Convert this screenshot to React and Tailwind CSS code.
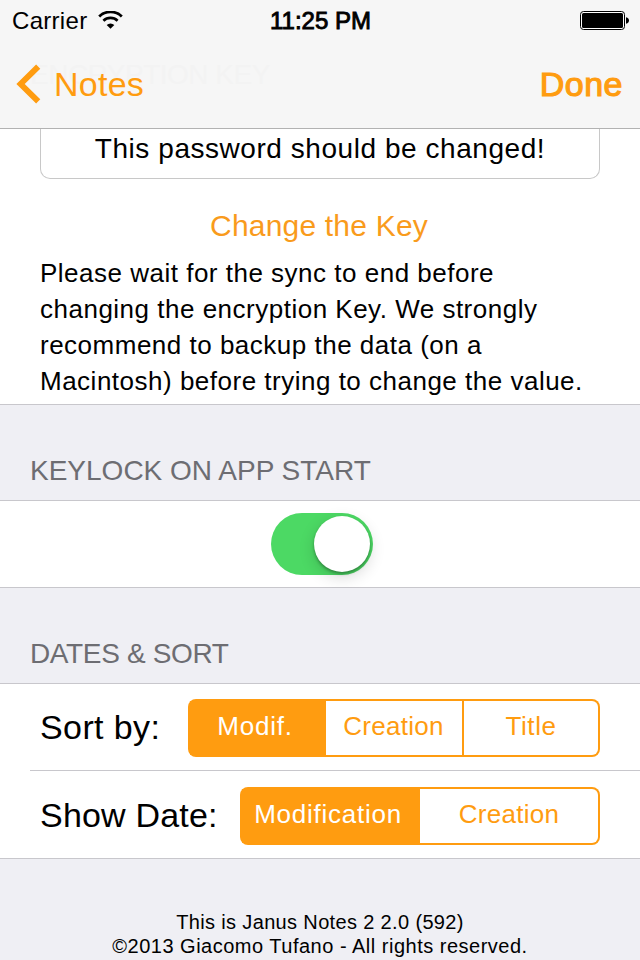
const SANS = "font-['Liberation_Sans',Arial,sans-serif]";

function WifiIcon() {
  return (
    <svg className="ml-[11px] h-[18px] w-[25px]" viewBox="0 0 25 18" fill="none" stroke="#000">
      <path d="M1.2 5.4 A16.5 16.5 0 0 1 23.8 5.4" strokeWidth="2.8" />
      <path d="M5.4 9.8 A10.3 10.3 0 0 1 19.6 9.8" strokeWidth="2.7" />
      <path d="M12.5 17.8 L8.7 14 A5.4 5.4 0 0 1 16.3 14 Z" fill="#000" stroke="none" />
    </svg>
  );
}

function BatteryIcon() {
  return (
    <svg className="h-[19px] w-[49px]" viewBox="0 0 49 19">
      <rect x="0.5" y="0.5" width="44" height="18" rx="3" fill="#fff" stroke="#000" />
      <rect x="2" y="2" width="41" height="15" rx="1.5" fill="#000" />
      <path d="M46 6.2 C48.2 6.6 49 8 49 9.5 C49 11 48.2 12.4 46 12.8 Z" fill="#000" />
    </svg>
  );
}

function SectionTitle({ children, className }) {
  return (
    <div className={`flex h-24 shrink-0 items-end border-b border-[#c8c7cc] bg-[#efeff4] pb-[13px] pl-[30px] text-[28px] leading-8 text-[#6d6d72] ${className}`}>
      <h2>{children}</h2>
    </div>
  );
}

function Segment({ label, selected, className }) {
  return (
    <button
      className={`flex items-center justify-center text-[26px] leading-none ${
        selected ? "bg-[#ff9c10] text-white" : "bg-white text-[#ff9c10]"
      } ${className}`}
    >
      {label}
    </button>
  );
}

export default function App() {
  return (
    <div className={`flex h-[960px] w-[640px] flex-col overflow-hidden bg-[#efeff4] text-black ${SANS}`}>
      <header className="relative h-[129px] shrink-0 border-b border-[#b2b2b2] bg-[#f6f6f6]">
        <div className="absolute top-[59px] left-[30px] text-[28px] leading-8 tracking-[-0.5px] text-[#f3f3f3]">ENCRYPTION KEY</div>
        <div className="relative grid h-10 grid-cols-3 items-center pr-[11px] pl-3">
          <div className="flex items-center text-[24px] leading-7 tracking-[0.3px]">
            <span className="pt-0.5">Carrier</span>
            <WifiIcon />
          </div>
          <div className="pt-0.5 text-center text-[24px] leading-7 whitespace-nowrap [-webkit-text-stroke:0.9px_#000]">11:25 PM</div>
          <div className="flex justify-end">
            <BatteryIcon />
          </div>
        </div>
        <nav className="relative flex h-[88px] items-center justify-between pr-[17px] pl-4 text-[34px] leading-10 text-[#ff9c10]">
          <button className="flex items-center">
            <svg className="h-[42px] w-[26px]" viewBox="0 0 26 42" fill="none">
              <path d="M22.2 3.7 L4.6 21 L22.2 38.3" stroke="#ff9c10" strokeWidth="5.9" />
            </svg>
            <span className="ml-3 tracking-[0.25px]">Notes</span>
          </button>
          <button className="tracking-[0.5px] [-webkit-text-stroke:1.2px_#ff9c10]">Done</button>
        </nav>
      </header>

      <section className="h-[276px] shrink-0 border-b border-[#c8c7cc] bg-white px-10">
        <div className="h-[50px] rounded-b-[10px] border-x border-b border-[#c8c8c8] pt-1 text-center text-[28px] leading-8 tracking-[0.55px]">
          This password should be changed!
        </div>
        <button className="mt-[29px] block w-full pr-0.5 text-center text-[30px] leading-9 tracking-[0.2px] text-[#f99b1c]">
          Change the Key
        </button>
        <p className="mt-[11px] text-[26px] leading-9 tracking-[0.5px]">
          Please wait for the sync to end before
          <br />
          changing the encryption Key. We strongly
          <br />
          recommend to backup the data (on a
          <br />
          Macintosh) before trying to change the value.
        </p>
      </section>

      <SectionTitle className="tracking-[0px]">KEYLOCK ON APP START</SectionTitle>
      <section className="flex h-[87px] shrink-0 justify-center border-b border-[#c8c7cc] bg-white pt-3 pl-1">
        <div className="flex h-[62px] w-[102px] items-center justify-end rounded-full bg-[#4cd964] pr-[3px]">
          <div className="size-14 rounded-full bg-white shadow-[0_5px_16px_rgba(0,0,0,0.16),0_2px_3px_rgba(0,0,0,0.3)]" />
        </div>
      </section>

      <SectionTitle className="tracking-[-0.35px]">DATES &amp; SORT</SectionTitle>
      <section className="shrink-0 border-b border-[#c8c7cc] bg-white pl-[30px]">
        <div className="flex h-[87px] items-center justify-between border-b border-[#c8c7cc] pr-10 pl-[10px]">
          <span className="text-[34px] leading-10 tracking-[0.4px]">Sort by:</span>
          <div className="mt-px flex h-[58px] w-[412px] overflow-hidden rounded-lg bg-[#ff9c10] p-0.5">
            <Segment label="Modif." selected className="w-[136px] pr-1.5 pb-1 tracking-[0.8px]" />
            <Segment label="Creation" className="w-[136px] pr-px pb-1 tracking-[0.3px]" />
            <Segment label="Title" className="ml-0.5 flex-1 rounded-r-md pb-1 tracking-[0.6px]" />
          </div>
        </div>
        <div className="flex h-[87px] items-center justify-between pr-10 pl-[10px]">
          <span className="text-[34px] leading-10 tracking-[0.2px]">Show Date:</span>
          <div className="mt-0.5 flex h-[58px] w-[360px] overflow-hidden rounded-lg bg-[#ff9c10] p-0.5">
            <Segment label="Modification" selected className="w-[178px] pr-1.5 pb-1 tracking-[0.75px]" />
            <Segment label="Creation" className="flex-1 rounded-r-md pb-1 tracking-[0.3px]" />
          </div>
        </div>
      </section>

      <footer className="pt-[51px] text-center text-[20px] leading-6">
        <p className="tracking-[0.35px]">This is Janus Notes 2 2.0 (592)</p>
        <p className="tracking-[0.5px]">©2013 Giacomo Tufano - All rights reserved.</p>
      </footer>
    </div>
  );
}
